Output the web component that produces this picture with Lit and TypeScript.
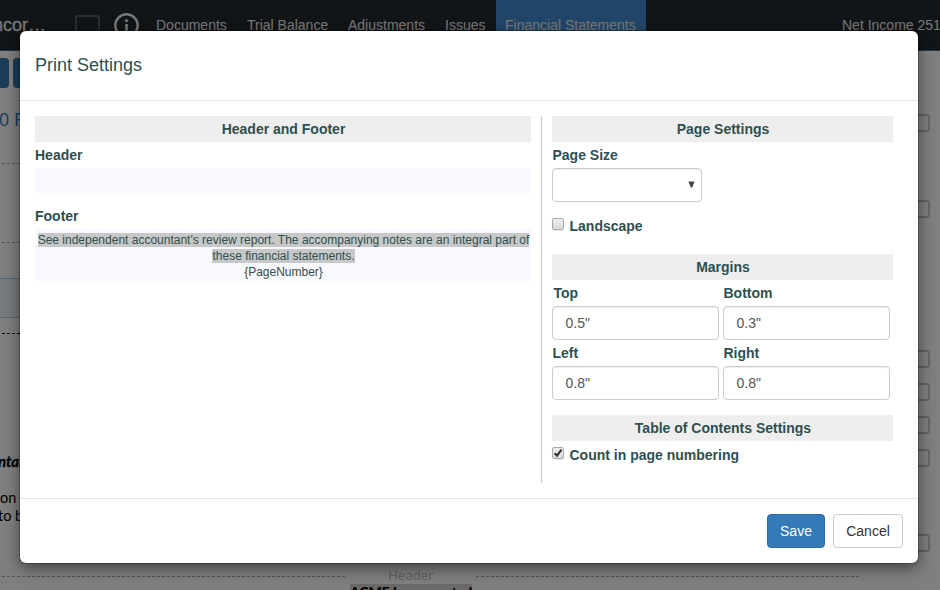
import { LitElement, html, css } from "lit";
import { customElement, property } from "lit/decorators.js";
import { classMap } from "lit/directives/class-map.js";

const NAV = [
  { id: "documents", label: "Documents" },
  { id: "trial", label: "Trial Balance" },
  { id: "adjustments", label: "Adjustments" },
  { id: "issues", label: "Issues" },
  { id: "statements", label: "Financial Statements", active: true },
];

const MARGINS = [
  { label: "Top", value: '0.5"' },
  { label: "Bottom", value: '0.3"' },
  { label: "Left", value: '0.8"' },
  { label: "Right", value: '0.8"' },
];

@customElement("report-page")
class ReportPage extends LitElement {
  static styles = css`
    :host { display: block; width: 940px; height: 590px; overflow: hidden; background: #fff; font-family: "Liberation Sans", Arial, sans-serif; }
    * { box-sizing: border-box; }
    .nav { display: flex; height: 51px; background: #222a2f; border-bottom: 1px solid #36709f; color: #eee; font-size: 14px; line-height: 50px; white-space: nowrap; }
    .company { flex: none; width: 75px; font-size: 18px; color: #eee; -webkit-text-stroke: 0.3px #eee; }
    .company span { display: inline-block; margin-left: -7px; }
    .box { flex: none; width: 25px; height: 24px; margin-top: 15px; border: 2px solid #555b5f; border-radius: 3px; }
    .info { flex: none; width: 26px; height: 26px; margin: 12px 20px 0 14px; }
    .info svg { display: block; }
    .tabs { display: flex; margin-left: -13px; }
    .tab { padding: 0 9px; }
    .documents { width: 91px; } .trial { width: 101px; } .adjustments { width: 97px; } .issues { width: 60px; }
    .active { width: 150px; background: #458dd2; }
    .income { margin-left: 196px; }
    .body { display: flex; justify-content: space-between; height: 525px; }
    .left { width: 40px; overflow: hidden; white-space: nowrap; }
    .right { width: 30px; padding-top: 63px; }
    .buttons { display: flex; gap: 4px; padding-top: 7px; height: 37px; }
    .btn { flex: none; width: 30px; height: 30px; border-radius: 4px; background: #357ab5; }
    .btn.cut { width: 9px; border-radius: 0 4px 4px 0; }
    .title { height: 75px; padding-top: 18px; color: #3476b4; font: 18px/27px "Open Sans", sans-serif; margin-left: -1px; }
    .dash { margin-left: 2px; height: 1px; background: repeating-linear-gradient(90deg, #aaa 0 3px, transparent 3px 5px); }
    .gap-a { height: 78px; }
    .gap-b { height: 35px; }
    .sel { height: 40px; background: #eef6fc; border: 1px solid #a9cce8; border-width: 1px 0; }
    .gap-c { height: 15px; }
    .dark { background: repeating-linear-gradient(90deg, #000 0 3px, transparent 3px 5px); }
    .who { margin-top: 117px; height: 20px; font: italic 700 15px/20px Lato, sans-serif; color: #000; margin-left: -2px; -webkit-text-stroke: 0.3px #000; }
    .p { margin-top: 18px; font: 14.5px/18px Lato, sans-serif; color: #000; }
    .p .out { margin-left: -2px; }
    .ck { width: 20px; height: 18px; border: 2px solid #c8c8c8; border-radius: 3px; margin-bottom: 15px; }
    .ck.g1 { margin-bottom: 68px; } .ck.g2 { margin-bottom: 132px; } .ck.g3 { margin-bottom: 67px; }
    .rule { display: flex; align-items: flex-start; height: 1px; }
    .rule .a { width: 344px; } .rule .b { width: 385px; margin-left: 0; }
    .rule .t { width: 130px; text-align: center; font: 13px/16px "Open Sans", sans-serif; color: #c0c0c0; margin-top: -9px; letter-spacing: 0.1px; }
    .ink { margin: 7px 0 0 350px; width: 122px; height: 20px; background: #d3d3d3; text-align: center; font: 900 14px/16px Lato, sans-serif; letter-spacing: -0.15px; color: #000; white-space: nowrap; }
  `;
  render() {
    return html`
      <div class="nav">
        <div class="company"><span>ncor…</span></div>
        <div class="box"></div>
        <div class="info">
          <svg width="26" height="26" viewBox="0 0 26 26" fill="none">
            <circle cx="12.5" cy="13.5" r="11.2" stroke="#eee" stroke-width="2.4" />
            <path d="M12.5 12V19" stroke="#eee" stroke-width="2.6" />
            <circle cx="12.5" cy="8.6" r="1.6" fill="#eee" />
          </svg>
        </div>
        <div class="tabs">
          ${NAV.map((n) => html`<div class=${classMap({ tab: true, [n.id]: true, active: !!n.active })}>${n.label}</div>`)}
        </div>
        <div class="income">Net Income 251</div>
      </div>
      <div class="body">
        <div class="left">
          <div class="buttons"><div class="btn cut"></div><div class="btn"></div></div>
          <div class="title">0 F</div>
          <div class="dash"></div>
          <div class="gap-a"></div>
          <div class="dash"></div>
          <div class="gap-b"></div>
          <div class="sel"></div>
          <div class="gap-c"></div>
          <div class="dash dark"></div>
          <div class="who">ntant</div>
          <div class="p"><div>on</div><div class="out">to be</div></div>
        </div>
        <div class="right">
          ${["g1", "g2", "", "", "", "g3", ""].map((g) => html`<div class="ck ${g}"></div>`)}
        </div>
      </div>
      <div class="rule"><div class="dash a"></div><div class="t">Header</div><div class="dash b"></div></div>
      <div class="ink">ACME Incorporated</div>
    `;
  }
}

@customElement("check-row")
class CheckRow extends LitElement {
  @property({ type: Boolean }) checked = false;
  @property() label = "";
  static styles = css`
    :host { display: flex; align-items: flex-start; }
    .mark { flex: none; width: 12px; height: 12px; border: 1px solid #aaa; border-radius: 2px; background: linear-gradient(#ededed, #dadada); box-shadow: 0 1px 1px rgba(0, 0, 0, 0.1); box-sizing: border-box; }
    .mark svg { display: block; }
    .text { margin: -1px 0 0 5.5px; font-weight: bold; font-size: 14px; line-height: 18px; white-space: nowrap; }
  `;
  render() {
    return html`<div class="mark">
        ${this.checked
          ? html`<svg width="10" height="10" viewBox="0 0 10 10"><path d="M1.7 5.2L4 7.7L8.5 1.6" fill="none" stroke="#333" stroke-width="2.1" /></svg>`
          : ""}
      </div>
      <div class="text">${this.label}</div>`;
  }
}

@customElement("print-settings")
class PrintSettings extends LitElement {
  static styles = css`
    :host { display: flex; flex-direction: column; width: 898px; height: 532px; background: #fff; border-radius: 6px; box-shadow: 0 0 0 1px rgba(0, 0, 0, 0.2), 0 5px 15px rgba(0, 0, 0, 0.5); color: #2f4f4f; font: 14px/20px "Liberation Sans", Arial, sans-serif; }
    * { box-sizing: border-box; }
    .head { height: 70px; padding: 21px 15px 0; border-bottom: 1px solid #e5e5e5; font-size: 18px; line-height: 26px; }
    .main { display: flex; height: 397px; padding: 15px 15px 0; }
    .foot { display: flex; justify-content: flex-end; gap: 8px; height: 65px; border-top: 1px solid #e5e5e5; padding: 15px 15px 0; }
    .col-l { width: 496px; }
    .col-r { width: 352px; height: 367px; margin-left: 10px; padding-left: 10px; border-left: 1px solid #c8c8c8; }
    .bar { height: 26px; background: #eee; text-align: center; font-weight: bold; line-height: 26px; padding-left: 1px; }
    .label { height: 26px; font-weight: bold; line-height: 26px; padding-left: 0.5px; }
    .col-l .label { padding-left: 0; }
    .field { background: #f8f8ff; height: 25px; }
    .gap { height: 10px; }
    .note { background: #f8f8ff; height: 52px; padding: 3px 0 0 1px; text-align: center; font-size: 12px; line-height: 16px; white-space: nowrap; }
    .hl { background: #c8c8c8; }
    .select { display: flex; justify-content: flex-end; align-items: center; width: 150px; height: 34px; padding: 0 6px 2px 0; border: 1px solid #ccc; border-radius: 4px; margin-bottom: 16px; box-shadow: inset 0 1px 1px rgba(0, 0, 0, 0.075); }
    .land { margin-bottom: 19px; }
    .grid { display: grid; grid-template-columns: 167px 167px; column-gap: 4px; margin-bottom: 15px; }
    .grid div:first-child > .label { padding-left: 1.5px; }
    .input { height: 34px; padding: 0 12.5px; border: 1px solid #ccc; border-radius: 4px; line-height: 32px; color: #555; box-shadow: inset 0 1px 1px rgba(0, 0, 0, 0.075); }
    .count { margin-top: 6px; }
    .btn { height: 34px; border: 1px solid #ccc; border-radius: 4px; text-align: center; line-height: 32px; width: 70px; color: #333; }
    .save { width: 58px; background: #337ab7; border-color: #2e6da4; color: #fff; }
  `;
  render() {
    return html`
      <div class="head">Print Settings</div>
      <div class="main">
        <div class="col-l">
          <div class="bar">Header and Footer</div>
          <div class="label">Header</div>
          <div class="field"></div>
          <div class="gap"></div>
          <div class="label">Footer</div>
          <div class="note">
            <span class="hl">See independent accountant's review report. The accompanying notes are an integral part of</span><br />
            <span class="hl">these financial statements.</span><br />{PageNumber}
          </div>
        </div>
        <div class="col-r">
          <div class="bar">Page Settings</div>
          <div class="label">Page Size</div>
          <div class="select">
            <svg width="7" height="7" viewBox="0 0 7 7"><path d="M0.4 0.5H6.6L4.2 6.5H2.8Z" fill="#444" /></svg>
          </div>
          <check-row class="land" label="Landscape"></check-row>
          <div class="bar">Margins</div>
          <div class="grid">
            ${MARGINS.map((m) => html`<div><div class="label">${m.label}</div><div class="input">${m.value}</div></div>`)}
          </div>
          <div class="bar">Table of Contents Settings</div>
          <check-row class="count" checked label="Count in page numbering"></check-row>
        </div>
      </div>
      <div class="foot">
        <div class="btn save">Save</div>
        <div class="btn">Cancel</div>
      </div>
    `;
  }
}

@customElement("app-root")
class AppRoot extends LitElement {
  static styles = css`
    :host { display: block; position: relative; width: 940px; height: 590px; overflow: hidden; }
    .backdrop { position: absolute; inset: 0; padding: 31px 0 0 20px; background: rgba(0, 0, 0, 0.5); }
  `;
  render() {
    return html`<report-page></report-page><div class="backdrop"><print-settings></print-settings></div>`;
  }
}
